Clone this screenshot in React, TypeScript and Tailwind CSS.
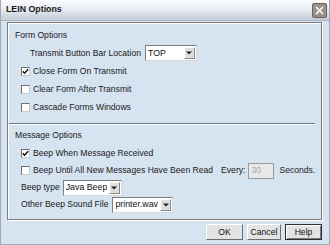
import React from "react";

function Check({ checked }: { checked?: boolean }) {
  return (
    <span className="w-[9px] h-[9px] shrink-0 bg-white border border-[#707070] border-r-[#c9c9c9] border-b-[#c9c9c9] flex items-center justify-center">
      {checked && (
        <svg width="7" height="7" viewBox="0 0 7 7">
          <path d="M0.8 3.4 L2.6 5.2 L6.2 1.2" stroke="#111" strokeWidth="1.5" fill="none" />
        </svg>
      )}
    </span>
  );
}

function Combo({ value, className }: { value: string; className: string }) {
  return (
    <div
      className={
        "h-[16px] shrink-0 bg-white border border-[#7d7d7d] border-r-[#d9d9d9] border-b-[#d9d9d9] flex items-center justify-between pl-[2px] pr-[1px] " +
        className
      }
    >
      <span className="text-[8.8px] leading-none text-[#111] whitespace-nowrap overflow-hidden">{value}</span>
      <span className="w-[11px] h-[12px] shrink-0 bg-[#dedede] border border-white border-r-[#8a8a8a] border-b-[#8a8a8a] flex items-center justify-center">
        <svg width="6" height="4" viewBox="0 0 6 4">
          <path d="M0 0.5 L6 0.5 L3 3.5 Z" fill="#222" />
        </svg>
      </span>
    </div>
  );
}

function Row({ children, className = "" }: { children: React.ReactNode; className?: string }) {
  return <div className={"flex items-center whitespace-nowrap " + className}>{children}</div>;
}

function Btn({ label, className, focus }: { label: string; className: string; focus?: boolean }) {
  return (
    <div
      className={
        "h-[16px] bg-[#e3e3e3] flex items-center justify-center " +
        (focus
          ? "border border-[#2e2e2e] shadow-[inset_1px_1px_0_#ffffff,inset_-1px_-1px_0_#7a7a7a] "
          : "border border-white border-r-[#6d6d6d] border-b-[#6d6d6d] ") +
        className
      }
    >
      <span className="text-[8.6px] leading-none text-[#111]">{label}</span>
    </div>
  );
}

export default function App() {
  return (
    <div className="w-[330px] h-[245px] bg-[#d6e3f0] border-l border-r border-b border-[#9fabba] flex flex-col font-['Liberation_Sans',Arial,sans-serif] text-[8.6px] text-[#1a1a1a] overflow-hidden">
      {/* title bar */}
      <div className="h-[21px] shrink-0 bg-linear-to-b from-[#fbfcfd] via-[#e6eaf0] to-[#c3ccd8] border-b border-[#aab4c2] flex items-center justify-between pl-[5px] pr-[2px]">
        <span className="font-bold text-[8.8px] text-[#1a1a1a]">LEIN Options</span>
        <span className="w-[15px] h-[15px] rounded-[2px] bg-[#9c8e89] border border-[#6e605b] flex items-center justify-center">
          <svg width="9" height="9" viewBox="0 0 9 9">
            <path d="M1 1 L8 8 M8 1 L1 8" stroke="#fff" strokeWidth="1.6" />
          </svg>
        </span>
      </div>

      {/* panel */}
      <div className="pl-[6px] pr-[7px] pt-[1px]">
        <div className="h-[198px] border border-[#857878] shadow-[inset_1px_1px_0_#ffffff,1px_1px_0_#ffffff] flex flex-col pt-[3px]">
          <Row className="h-[18px] pl-[7px]">Form Options</Row>
          <Row className="h-[18px] pl-[22px]">
            <span>Transmit Button Bar Location</span>
            <Combo value="TOP" className="ml-[4px] w-[52px]" />
          </Row>
          <Row className="h-[18px] pl-[13px] gap-[3px]">
            <Check checked />
            <span>Close Form On Transmit</span>
          </Row>
          <Row className="h-[18px] pl-[13px] gap-[3px]">
            <Check />
            <span>Clear Form After Transmit</span>
          </Row>
          <Row className="h-[18px] pl-[13px] gap-[3px]">
            <Check />
            <span>Cascade Forms Windows</span>
          </Row>

          <div className="mt-[7px] ml-[1px] mr-[6px] h-[2px] border-t border-[#6c7585] border-b border-b-white" />

          <Row className="h-[18px] pl-[7px] mt-[1px]">Message Options</Row>
          <Row className="h-[18px] pl-[13px] gap-[3px]">
            <Check checked />
            <span>Beep When Message Received</span>
          </Row>
          <Row className="h-[17px] pl-[13px]">
            <Check />
            <span className="ml-[3px]">Beep Until All New Messages Have Been Read</span>
            <span className="ml-[8px]">Every:</span>
            <span className="ml-[3px] w-[26px] h-[16px] bg-[#e6e8ea] border border-[#9a9a9a] flex items-center pl-[2px] text-[#a8a8a8]">
              30
            </span>
            <span className="ml-[5px]">Seconds.</span>
          </Row>
          <Row className="h-[17px] pl-[13px]">
            <span>Beep type</span>
            <Combo value="Java Beep" className="ml-[3px] w-[59px]" />
          </Row>
          <Row className="h-[17px] pl-[13px]">
            <span>Other Beep Sound File</span>
            <Combo value="printer.wav" className="ml-[4px] w-[61px]" />
          </Row>
        </div>
      </div>

      {/* buttons */}
      <div className="flex justify-end pr-[7px] pt-[4px] gap-[4px]">
        <Btn label="OK" className="w-[37px]" />
        <Btn label="Cancel" className="w-[34px]" />
        <Btn label="Help" className="w-[37px]" focus />
      </div>
    </div>
  );
}
